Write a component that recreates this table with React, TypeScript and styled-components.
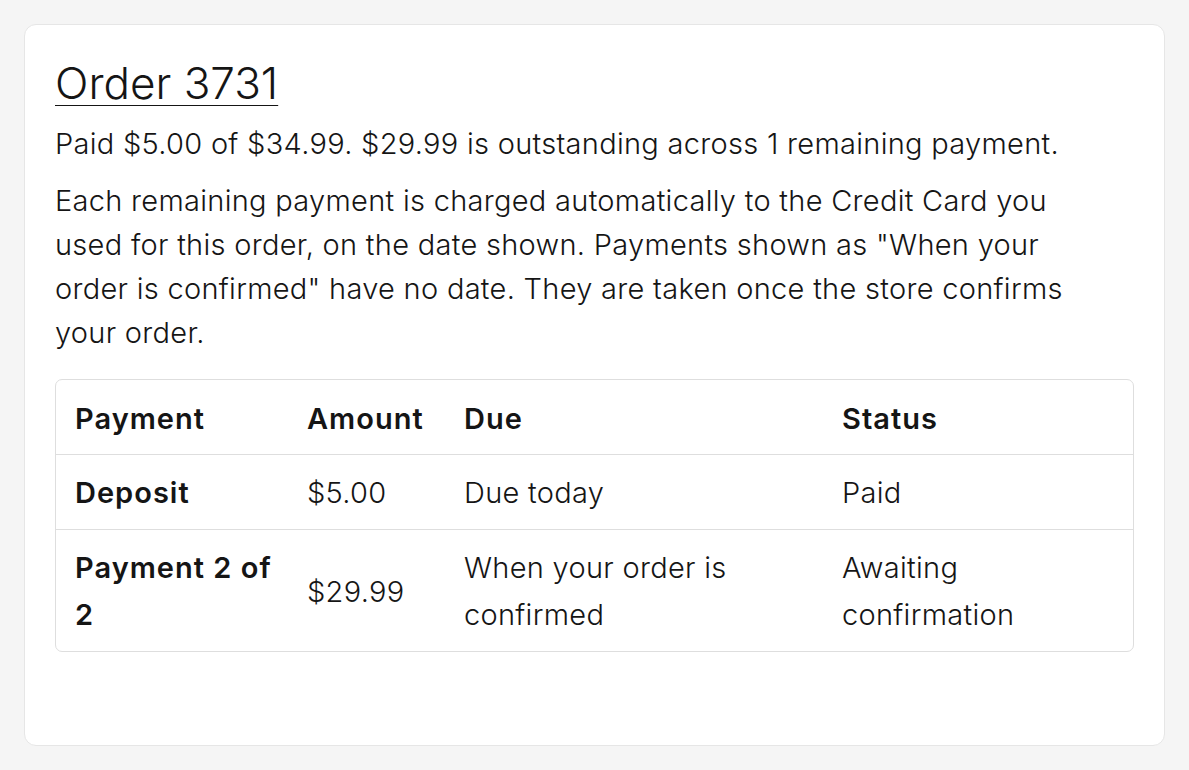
import React from 'react';
import styled, { createGlobalStyle } from 'styled-components';

const GlobalStyle = createGlobalStyle`
  html, body {
    margin: 0;
    padding: 0;
    background: #f5f5f5;
  }
  body {
    font-family: Inter, "Noto Sans", sans-serif;
    color: #151515;
  }
  * {
    box-sizing: border-box;
  }
`;

const Page = styled.div`
  padding: 24px;
  height: 100vh;
`;

const Card = styled.section`
  height: 100%;
  background: #ffffff;
  border: 1px solid #e6e6e6;
  border-radius: 12px;
  padding: 30px 30px;
`;

const Title = styled.a`
  display: inline-block;
  margin-bottom: 11px;
  font-size: 44px;
  font-weight: 300;
  line-height: 56px;
  color: #151515;
  text-decoration: underline;
  text-decoration-thickness: 1px;
  text-underline-offset: 6px;
`;

const Text = styled.p`
  max-width: 1022px;
  margin: 0 0 13px;
  font-size: 29px;
  font-weight: 300;
  line-height: 44px;
  letter-spacing: 0.01em;
`;

const TableWrap = styled.div`
  margin-top: 24px;
  border: 1px solid #dedede;
  border-radius: 7px;
  overflow: hidden;
`;

const Table = styled.table`
  width: 100%;
  border-collapse: collapse;
  table-layout: fixed;
`;

const Th = styled.th<{ $w: number }>`
  width: ${(p) => p.$w}px;
  text-align: left;
  padding: 15px 19px 12px;
  font-size: 29px;
  font-weight: 600;
  line-height: 47px;
  letter-spacing: 0.035em;
  border-bottom: 1px solid #dedede;
`;

const Row = styled.tr`
  & + & td {
    border-top: 1px solid #dedede;
  }
`;

const Td = styled.td<{ $bold?: boolean }>`
  padding: 14px 19px 13px;
  font-size: 29px;
  font-weight: ${(p) => (p.$bold ? 600 : 300)};
  line-height: 47px;
  letter-spacing: ${(p) => (p.$bold ? '0.035em' : '0.01em')};
  vertical-align: middle;

  &:first-child {
    padding-right: 10px;
  }
`;

const payments = [
  { name: 'Deposit', amount: '$5.00', due: 'Due today', status: 'Paid' },
  {
    name: 'Payment 2 of 2',
    amount: '$29.99',
    due: 'When your order is confirmed',
    status: 'Awaiting confirmation',
  },
];

const App = () => {
  return (
    <>
      <GlobalStyle />
      <Page>
        <Card>
          <Title>Order 3731</Title>
          <Text>
            Paid $5.00 of $34.99. $29.99 is outstanding across 1 remaining payment.
          </Text>
          <Text>
            Each remaining payment is charged automatically to the Credit Card you
            used for this order, on the date shown. Payments shown as "When your
            order is confirmed" have no date. They are taken once the store confirms
            your order.
          </Text>
          <TableWrap>
            <Table>
              <thead>
                <tr>
                  <Th $w={232}>Payment</Th>
                  <Th $w={157}>Amount</Th>
                  <Th $w={378}>Due</Th>
                  <Th $w={310}>Status</Th>
                </tr>
              </thead>
              <tbody>
                {payments.map((p) => (
                  <Row key={p.name}>
                    <Td $bold>{p.name}</Td>
                    <Td>{p.amount}</Td>
                    <Td>{p.due}</Td>
                    <Td>{p.status}</Td>
                  </Row>
                ))}
              </tbody>
            </Table>
          </TableWrap>
        </Card>
      </Page>
    </>
  );
};

export default App;
